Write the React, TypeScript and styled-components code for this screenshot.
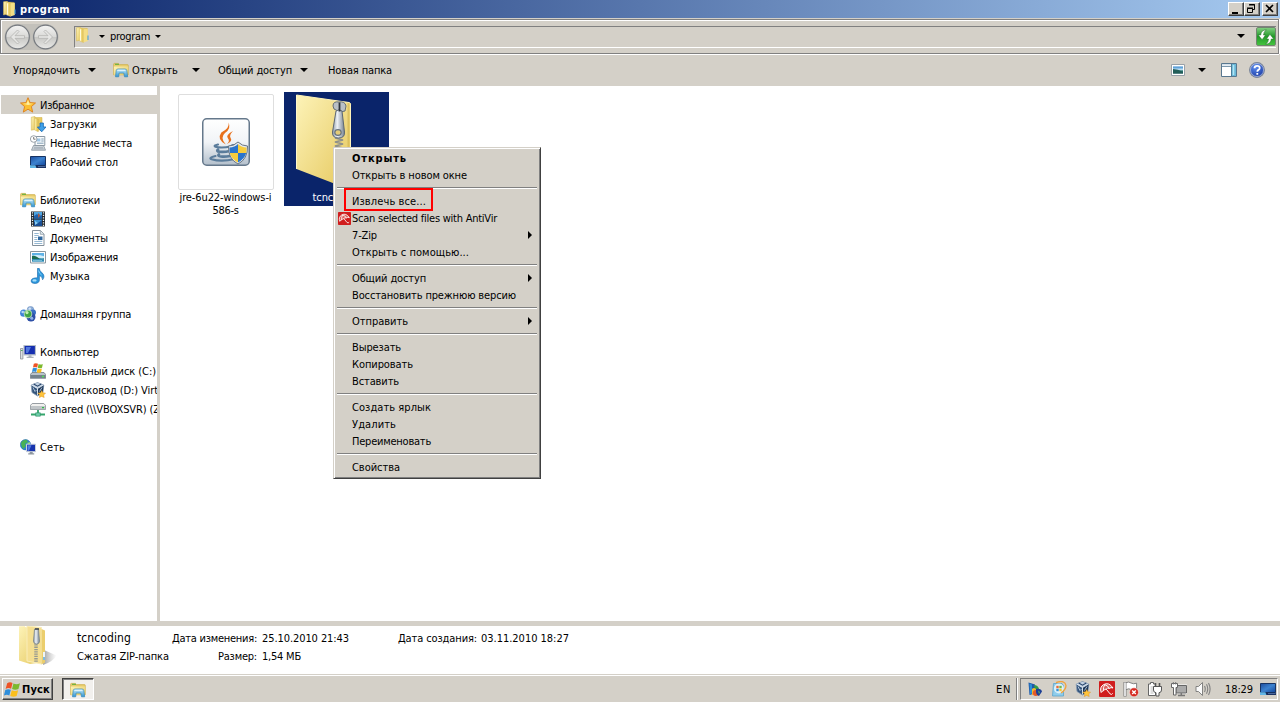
import React, { useLayoutEffect, useRef, useState } from 'react';
import styled, { createGlobalStyle, css } from 'styled-components';

const FACE = '#d4d0c8';

const GlobalStyle = createGlobalStyle`
  * { box-sizing: border-box; }
  html, body { margin: 0; padding: 0; overflow: hidden; }
  body {
    font-family: "DejaVu Sans Condensed", "DejaVu Sans", "Noto Sans", sans-serif;
    font-size: 11px;
    line-height: 13px;
    color: #000;
    background: #fff;
  }
  svg { display: block; flex: none; }
`;

/* ---------- text ---------- */

const LabelText = styled.span<{ $bold?: boolean; $size?: number; $tone?: string }>`
  display: inline-block;
  white-space: pre;
  flex: none;
  font-weight: ${p => (p.$bold ? 700 : 400)};
  font-size: ${p => p.$size ?? 11}px;
  color: ${p => p.$tone ?? '#000'};
`;

type LabelProps = { children: string; width: number; bold?: boolean; size?: number; tone?: string };

/* Tracks the text so that it takes up the given width. */
function Label({ children, width, bold, size, tone }: LabelProps) {
  const ref = useRef<HTMLSpanElement>(null);
  const [spacing, setSpacing] = useState(0);
  useLayoutEffect(() => {
    const natural = ref.current!.getBoundingClientRect().width;
    setSpacing((width - natural) / children.length);
  }, [children, width]);
  return (
    <LabelText ref={ref} $bold={bold} $size={size} $tone={tone} style={{ letterSpacing: spacing }}>
      {children}
    </LabelText>
  );
}

/* ---------- icons ---------- */

type IconProps = { size?: number };

const Svg = ({ size = 16, box = 16, children }: { size?: number; box?: number; children: React.ReactNode }) => (
  <svg width={size} height={size} viewBox={`0 0 ${box} ${box}`}>{children}</svg>
);

const HiddenDefs = styled.svg`
  position: absolute;
`;

const Gradients = () => (
  <HiddenDefs width="0" height="0">
    <defs>
      <linearGradient id="gold" x1="0" y1="0" x2="1" y2="1">
        <stop offset="0" stopColor="#fdf3b8" /><stop offset="1" stopColor="#e5c75c" />
      </linearGradient>
      <linearGradient id="goldH" x1="0" y1="0" x2="1" y2="0">
        <stop offset="0" stopColor="#fff6c0" /><stop offset=".5" stopColor="#efd777" /><stop offset="1" stopColor="#d9b94c" />
      </linearGradient>
      <linearGradient id="sky" x1="0" y1="0" x2="0" y2="1">
        <stop offset="0" stopColor="#c6ecfb" /><stop offset="1" stopColor="#2f93cf" />
      </linearGradient>
      <linearGradient id="screen" x1="0" y1="0" x2="1" y2="1">
        <stop offset="0" stopColor="#1c4c9c" /><stop offset=".5" stopColor="#3c82cf" /><stop offset="1" stopColor="#12459a" />
      </linearGradient>
      <linearGradient id="steel" x1="0" y1="0" x2="1" y2="0">
        <stop offset="0" stopColor="#8a97a5" /><stop offset=".4" stopColor="#eef2f6" /><stop offset="1" stopColor="#748190" />
      </linearGradient>
      <linearGradient id="disc" x1="0" y1="0" x2="0" y2="1">
        <stop offset="0" stopColor="#f4f4f3" /><stop offset=".48" stopColor="#dadad8" /><stop offset=".52" stopColor="#c8c8c5" /><stop offset="1" stopColor="#e9e9e7" />
      </linearGradient>
      <linearGradient id="java" x1="0" y1="0" x2="0" y2="1">
        <stop offset="0" stopColor="#ffffff" /><stop offset=".5" stopColor="#f1f4f7" /><stop offset="1" stopColor="#b3bfcb" />
      </linearGradient>
      <linearGradient id="photo" x1="0" y1="0" x2="0" y2="1">
        <stop offset="0" stopColor="#2f84cc" /><stop offset=".5" stopColor="#d7eefa" /><stop offset=".6" stopColor="#2f7f78" /><stop offset="1" stopColor="#16525f" />
      </linearGradient>
      <radialGradient id="help" cx=".4" cy=".3" r=".8">
        <stop offset="0" stopColor="#5f8ff0" /><stop offset="1" stopColor="#12309a" />
      </radialGradient>
      <linearGradient id="shadow" x1="0" y1="0" x2="1" y2="0">
        <stop offset="0" stopColor="#777" stopOpacity=".7" /><stop offset="1" stopColor="#999" stopOpacity="0" />
      </linearGradient>
    </defs>
  </HiddenDefs>
);

const FolderOpenIcon = ({ size }: IconProps) => (
  <Svg size={size}>
    <path d="M1.500 .8 5.500 .3v12.700l-4 1z" fill="url(#gold)" stroke="#d8b94e" strokeWidth=".5" />
    <path d="M6 1 12.300 1.500v11.500L8 14z" fill="#ecd06a" stroke="#cfae44" strokeWidth=".4" />
    <path d="M4.500 1 8.500 2.200V15.500l-4-1.500z" fill="url(#goldH)" stroke="#d8b94e" strokeWidth=".4" />
    <path d="M8.500 2.200 12.800 2V14L8.500 15.500z" fill="#f4de85" />
    <path d="M5.500 2.500v11" stroke="#fffbe0" strokeWidth="1" />
    <path d="M13 8.500v4.500" stroke="#4aa3dc" strokeWidth="1.100" />
  </Svg>
);

const LibraryIcon = ({ size }: IconProps) => (
  <Svg size={size}>
    <path d="M.6 2.200q0-.8.8-.8h4l1 1.200h8q.9 0 .9.9v9.300H.6z" fill="#e8cd6c" stroke="#c9a73f" strokeWidth=".6" />
    <path d="M2 2.300h4" stroke="#56ad3b" strokeWidth="1" />
    <path d="M.9 4.500h14.200v8.300H.9z" fill="url(#gold)" />
    <path d="M2.500 14.800 3.200 8.600q.2-1.600 1.800-1.600h7q1.600 0 1.800 1.600l.9 6.200h-3.200l-.7-3.700H6.100l-.4 3.700z" fill="url(#sky)" stroke="#3287bb" strokeWidth=".7" />
    <path d="M4.400 8.300h8" stroke="#eefaff" strokeWidth=".9" />
  </Svg>
);

const StarIcon = () => (
  <Svg>
    <path d="m8 .7 2.100 4.900 5.400.4-4.100 3.600 1.300 5.500L8 12.200l-4.700 2.900 1.300-5.500L.5 6l5.400-.4z" fill="#fcbf32" stroke="#dc7f1c" strokeWidth=".9" strokeLinejoin="round" />
    <path d="m8 2.700 1.300 3.800 3.900.3-5 1.200-5.300-1.200 3.800-.3z" fill="#fff0a0" />
  </Svg>
);

const DownloadsIcon = () => (
  <Svg>
    <path d="M1.300 1.200 5 .5v13l-3.700.7z" fill="url(#gold)" stroke="#cfae44" strokeWidth=".5" />
    <path d="M5 1.500h7V14H6z" fill="#e9cb62" stroke="#cfae44" strokeWidth=".5" />
    <path d="m4.500 2 3.800 1.300V15.800l-3.800-1.900z" fill="url(#goldH)" stroke="#cfae44" strokeWidth=".4" />
    <path d="M10 7h3.400v4H16l-4.300 4.800L7.400 11H10z" fill="#3fa0e8" stroke="#1668b4" strokeWidth=".8" />
  </Svg>
);

const RecentIcon = () => (
  <Svg>
    <path d="M5 1.500h9.800v9H5z" fill="#f8fafb" stroke="#8997a3" />
    <path d="M6.800 3.500h3.600v3H6.800z" fill="#9ec6e6" /><path d="M11.300 4h2.400M11.300 6h2.400M7 8.200h6.600" stroke="#7e9db6" />
    <path d="M3.500 10.500h10l2 4.700H1.500z" fill="#d3dae0" stroke="#84909b" strokeWidth=".8" />
    <path d="M4 12.300h9M3.600 13.800h10" stroke="#8f9ba6" strokeWidth=".7" />
    <circle cx="3.700" cy="4" r="3.300" fill="#fff" stroke="#8e979f" strokeWidth=".9" /><path d="M3.700 2v2.200h1.800" stroke="#555" strokeWidth=".8" fill="none" />
  </Svg>
);

const DesktopIcon = ({ size }: IconProps) => (
  <Svg size={size}>
    <path d="M.5 2.500h15v9H.5z" fill="url(#screen)" stroke="#173362" />
    <path d="M0 11.600h16v2.400H0z" fill="#162c5c" /><path d="M0 11.300h5.400l1 2.700H0z" fill="#60b5e5" />
    <path d="M8 12.600h7.500" stroke="#6b8cc0" strokeWidth=".7" />
  </Svg>
);

const VideoIcon = () => (
  <Svg>
    <path d="M1 .5h14v15H1z" fill="#23282d" />
    <path d="M4 1h8v6.400H4z" fill="#4fa5e1" /><path d="M4 8.600h8V15H4z" fill="#3a8fd2" />
    <path d="m4 5 3-2 2 2 3-1v3.400H4z" fill="#1f5fa8" /><path d="m8 2 2.500 2.500L8 7z" fill="#a65a44" />
    <path d="m4 11 4 1 4-3v6H4z" fill="#1b4f94" /><path d="m5 10 3 2-3 2z" fill="#8bd0f4" />
    <path d="M2.500 1.200v14M13.500 1.200v14" stroke="#eef2f4" strokeWidth="1.300" strokeDasharray="1.300 1.200" />
  </Svg>
);

const DocumentIcon = () => (
  <Svg>
    <path d="M2.500.5h8l3.500 3.600v11.400H2.500z" fill="#fff" stroke="#83909b" />
    <path d="M10.300.7v3.600H14" fill="#dfe8ee" stroke="#83909b" strokeWidth=".7" />
    <path d="M4.300 3.500h4.400M4.300 5.500h4.400M4.300 7.500h3M4.300 9.500h3M4.300 11.500h8M4.300 13.500h8" stroke="#7aa6c8" strokeWidth=".8" />
    <path d="M8 6.500h4.500v3.600H8z" fill="#2f679f" />
  </Svg>
);

const PictureIcon = ({ size }: IconProps) => (
  <Svg size={size}>
    <path d="M.5 2.500h15v11.500H.5z" fill="#fff" stroke="#8b979f" />
    <path d="M2 4h12v8.500H2z" fill="#5fb2e6" /><path d="M2 6.500q6-1.500 12 .8v2H2z" fill="#d5effa" />
    <path d="M2 7q3-1 5.500 1.300T14 9.400v.9H2z" fill="#1c6d50" /><path d="M2 10.300h12v2.200H2z" fill="#2b86ac" /><path d="M3 11.500h9" stroke="#8fd0e4" strokeWidth=".7" />
  </Svg>
);

const MusicIcon = () => (
  <Svg>
    <path d="M7.500.3h1.700q.5 2.700 2.800 4.500 3.600 3.100.6 7-.1-3.200-3.200-4.300v4.200q0 3.500-4.300 3.800-4 .1-4-2.400 0-3.400 6.400-3.300z" fill="#2c98dc" stroke="#1b67a9" strokeWidth=".6" />
    <ellipse cx="4.500" cy="12.400" rx="2" ry="1.200" fill="#a7defa" />
    <path d="M8.600 2.500q.5 3 3 4.500" stroke="#8bd3f8" fill="none" />
  </Svg>
);

const HomegroupIcon = () => (
  <Svg>
    <circle cx="10.500" cy="3.700" r="3.300" fill="#8fb0da" stroke="#5f84b8" strokeWidth=".5" /><circle cx="3.700" cy="7.200" r="3.600" fill="#3f82d8" />
    <circle cx="13" cy="6.500" r="3" fill="#3a70c4" /><circle cx="11" cy="11" r="4.500" fill="#2d4fa6" />
    <circle cx="8" cy="8" r="3.900" fill="#3fa547" stroke="#dff0d4" strokeWidth=".7" />
    <circle cx="7" cy="6.600" r="1.600" fill="#c3eeb2" /><circle cx="2.700" cy="6" r="1.300" fill="#b4d6f8" /><circle cx="9.800" cy="2.600" r="1.200" fill="#d5e5f7" /><circle cx="11.800" cy="12.300" r="1.500" fill="#8fb3e8" />
  </Svg>
);

const ComputerIcon = () => (
  <Svg>
    <path d="M.5 4.500h2.400v10.500H.5z" fill="#dce0e3" stroke="#8b9197" strokeWidth=".8" /><path d="M1.200 6.500h1.300" stroke="#34a24b" />
    <path d="M4 1.500h11.500v9.300H4z" fill="#162fb0" stroke="#b5bec7" strokeWidth="1.200" />
    <path d="M6 3h5l-3 6H6z" fill="#5c84e5" opacity=".85" />
    <path d="M8.500 11.300h3v1.700h-3zM6.600 12.800h7v1.200h-7z" fill="#adb4bb" />
  </Svg>
);

const WindowsFlag = ({ size }: IconProps) => (
  <Svg size={size}>
    <path d="M3 2Q5.500.5 8 1.800L6.700 7.200Q4 6 1.500 7.500z" fill="#ee5325" />
    <path d="M8.900 2.300q2.800 1.500 6.100-.1l-1.400 5.300q-3 1.500-6 0z" fill="#7cb92d" />
    <path d="M1.200 8.500q2.700-1.500 5.200-.2L5 13.600Q2.500 12.300-.1 13.700z" fill="#2f8edb" />
    <path d="M7.300 8.700q3 1.400 6 0L11.900 14q-2.900 1.500-6 0z" fill="#fbbf1d" />
  </Svg>
);

const DriveIcon = () => (
  <Svg>
    <path d="m2 9.500 12 0 1.700 2v3.800H.3v-3.800z" fill="#b9c2c9" stroke="#606d77" strokeWidth=".7" />
    <path d="M.6 12h14.800v3H.6z" fill="#74828c" /><path d="M12 13.500h2" stroke="#54de5a" strokeWidth="1.300" />
    <path d="M3.800.700q2.300-1 4.200.1L7.200 4.600q-2.300-1-4.200 0z" fill="#ee5325" /><path d="M8.600 1q2.300 1 4.200 0l-.8 3.700q-2.200 1-4.200 0z" fill="#7cb92d" />
    <path d="M2.800 5.300q2.200-1 4.200 0l-.8 3.700q-2.200-1-4.200 0z" fill="#2f8edb" /><path d="M7.600 5.500q2.200 1 4.300 0l-.8 3.700q-2.200 1-4.300 0z" fill="#fbbf1d" />
  </Svg>
);

const VBoxIcon = () => (
  <Svg>
    <path d="M7.500.6 13.800 3l-.9 7.500L7.500 14 2 10.500 1.200 3z" fill="#35557c" stroke="#8499b2" strokeWidth=".8" />
    <path d="M7.500.8 13.500 3 7.500 6.500 1.500 3z" fill="#c4d3e4" /><path d="M7.500 6.500 13.500 3l-.8 7.300L7.500 13.700z" fill="#1f3858" />
    <path d="m3.700 2 3.800 2.200L11.300 2" fill="none" stroke="#28456a" strokeWidth="1.100" />
    <path d="M1.500 3 7.500 6.500 13.500 3M7.500 6.500v7" fill="none" stroke="#e8f0f8" strokeWidth=".9" />
    <path d="m3 5.500 2 4 1.500-1.500M12 5.500l-2.500 4" fill="none" stroke="#b9cce0" strokeWidth=".9" />
    <path d="m11.700 8.500 1.200 2.300 2.700.3-1.900 1.900.5 2.600-2.500-1.200-2.400 1.200.4-2.600-1.900-1.900 2.700-.3z" fill="#ffc43b" stroke="#d98b18" strokeWidth=".4" />
  </Svg>
);

const NetDriveIcon = () => (
  <Svg>
    <path d="M2.200 2.500h11.600l1.700 1.800v4.200H.5V4.300z" fill="#f1f1ef" stroke="#7f878d" strokeWidth=".8" />
    <path d="M.8 5h14.400v3.200H.8z" fill="#c0c5c8" /><path d="M12 6.600h2" stroke="#2cbd44" strokeWidth="1.300" />
    <path d="M8 9v4M1 13.500h14" stroke="#35a66c" strokeWidth="1.800" /><path d="M5.700 11.800h4.600v3.400H5.700z" fill="#6fceaa" stroke="#268a60" strokeWidth=".6" />
  </Svg>
);

const NetworkIcon = () => (
  <Svg>
    <circle cx="5.500" cy="5.700" r="5.200" fill="#2b86d4" stroke="#1a5c9f" strokeWidth=".5" />
    <path d="M1 4q2-3.500 5.500-3.200L8 3 5 5l1 2-3 3Q1 7 1 4z" fill="#49b254" /><path d="m7 4 3-1v4z" fill="#92d86f" />
    <path d="M6.500 5.200h9v7.500h-9z" fill="#1733ad" stroke="#cbd2d9" /><path d="M7.500 6.200h4l-2.500 5.500H7.500z" fill="#537be0" />
    <path d="M9.700 13h3v1.500h-3zM8.200 14.300h6v1.200h-6z" fill="#8d969f" />
  </Svg>
);

const UmbrellaIcon = ({ size }: IconProps) => (
  <Svg size={size}>
    <rect width="16" height="16" rx="1" fill="#d01d1d" />
    <path d="M2.200 11.500Q.2 6.200 4.700 3.500 10 .8 14 7q-2.200-1-3.600.4-1.900-.9-3.200.7-1.900.1-2.600 1.600-1.500.2-2.400 1.800z" fill="#dd6460" stroke="#fff" strokeWidth="1" strokeLinejoin="round" />
    <path d="M4.600 9.700q-.6-3.700 1.100-6M10.400 7.400Q8.500 4 5.700 3.700M7.200 8.100l3.900 4.800q1.600 1.300 2.600-.5" fill="none" stroke="#fff" strokeWidth="1" />
  </Svg>
);

const ViewIcon = () => (
  <Svg>
    <path d="M1.500 2.500h13v11h-13z" fill="#fff" stroke="#99a1a8" /><path d="M3 4.500h10v7H3z" fill="url(#photo)" />
    <path d="M3 7q5 0 10 3v1.500H3z" fill="#225e58" />
  </Svg>
);

const PaneIcon = () => (
  <Svg>
    <path d="M.5 1.500h15v13H.5z" fill="#fff" stroke="#58778f" /><path d="M1 2h14v1.600H1z" fill="#d3e0ea" /><path d="M1 4.500h9" stroke="#7c98ad" />
    <path d="M10.500 2h4.500v12h-4.500z" fill="#69b9d8" /><path d="M12.500 3v10" stroke="#b3e4f5" strokeWidth="1.500" /><path d="M10.500 2v12" stroke="#4c7c98" />
  </Svg>
);

const HelpIcon = () => (
  <Svg>
    <circle cx="8" cy="8" r="7.400" fill="url(#help)" stroke="#7d8799" strokeWidth="1.100" />
    <circle cx="8" cy="8" r="6.500" fill="none" stroke="#d3dcf0" strokeWidth=".6" />
    <path d="M5.500 6.200q0-2.400 2.600-2.400 2.600 0 2.600 2.100 0 1.300-1.300 2Q8.300 8.500 8.300 9.800M8.300 11v1.700" fill="none" stroke="#fff" strokeWidth="1.800" />
  </Svg>
);

const RefreshIcon = () => (
  <Svg>
    <path d="M8.300.8Q3 1.200 2.700 6H.2l3.900 4.700L7.600 6H5.500q-.2-2.800 2.800-5.200z" fill="#fff" stroke="#1d6b20" strokeWidth=".5" />
    <path d="M7.700 15.200q5.300-.4 5.600-5.200h2.500L11.900 5.300 8.400 10h2.100q.2 2.800-2.800 5.200z" fill="#fff" stroke="#1d6b20" strokeWidth=".5" />
  </Svg>
);

const ActionFlagIcon = () => (
  <Svg>
    <path d="M2 1v14.500" stroke="#777" strokeWidth="3" /><path d="M3 1.700q3-1.400 5 .3 2.500 1.400 5.600.2V9q-3.500 1-5.600-.5T3 8.700z" fill="#fff" stroke="#777" strokeWidth=".9" /><path d="M2 1.500V15" stroke="#fff" strokeWidth="1.500" />
    <circle cx="11" cy="11.300" r="4.500" fill="#d52b22" stroke="#fff" strokeWidth=".5" /><path d="m9.200 9.500 3.600 3.600m0-3.600-3.600 3.600" stroke="#fff" strokeWidth="1.400" />
  </Svg>
);

const PowerIcon = () => (
  <Svg>
    <path d="M3.500 1.500h3V3h2v11.500h-7V3h2z" fill="#fff" stroke="#666" /><path d="M3.500 5v8h3V5z" fill="#ddd" />
    <path d="M8.500 5V2M12.500 5V2" stroke="#555" strokeWidth="1.600" /><path d="M6.500 5.500h8v3.500q0 2.500-2.500 2.700V15H9v-3.300Q6.500 11.500 6.500 9z" fill="#fff" stroke="#555" />
  </Svg>
);

const NetTrayIcon = () => (
  <Svg>
    <path d="M5 4.500h10.500v7.500H5z" fill="#aaa" stroke="#fff" strokeWidth="2" /><path d="M5 4.500h10.500v7.500H5z" fill="#aaa" stroke="#666" />
    <path d="M7 14.500h7M10.300 12v2.500" stroke="#777" strokeWidth="1.500" />
    <path d="M.5 2.500h6v4H5v7.500H2.500V6.500h-2z" fill="#fff" stroke="#666" /><path d="M2.300 1v2.500M4.700 1v2.500" stroke="#777" />
  </Svg>
);

const SpeakerIcon = () => (
  <Svg>
    <path d="M1 5.500h2.500L7.500 1.500v13l-4-4H1z" fill="#fafafa" stroke="#777" strokeWidth=".9" />
    <path d="M9.500 5q1.500 3 0 6M11.500 3.300q2.500 4.700 0 9.400M13.500 2q3.200 6 0 12" fill="none" stroke="#808080" strokeWidth="1.100" />
  </Svg>
);

const SafeRemoveIcon = () => (
  <Svg>
    <path d="M1.500 1.500 8 3.500v9l-5.500 1.500z" fill="#1f58a8" /><path d="m2.500 2.500 2.500 1v9l-2 .5z" fill="#2a8fd8" />
    <path d="M7 4q4 0 5 4l-4 2z" fill="#2f9c4c" /><path d="M5 8q2-2 4 0v5l-4 1z" fill="#eeb92e" />
    <circle cx="8.800" cy="12" r="3" fill="#e25a2b" /><path d="M9 8q5-1 6 2.500l-3 4.500q-2.500-.5-3-4z" fill="#1c3f95" /><path d="M11 9.500l2 1.500-1 2z" fill="#58b55f" />
  </Svg>
);

const UpdateIcon = () => (
  <Svg>
    <path d="M2.500 2.500h8.500L12.500 5v10h-11z" fill="#8fcdec" stroke="#5aa5cd" strokeWidth=".8" />
    <circle cx="8" cy="7.500" r="5" fill="#e7f5fb" opacity=".9" />
    <path d="M5.300 4.800h2.400v2.400H5.300z" fill="#ec6a35" /><path d="M8.300 4.800h2.400v2.400H8.300z" fill="#75b943" /><path d="M5.300 7.800h2.400v2.400H5.300z" fill="#3794d9" /><path d="M8.300 7.800h2.400v2.400H8.300z" fill="#f8c436" />
    <path d="M5 1.600Q14-1.500 15 4.500q0 4-5 7.500" fill="none" stroke="#f2a33c" strokeWidth="1.300" />
  </Svg>
);

const JavaInstallerIcon = () => (
  <svg width="48" height="48" viewBox="0 0 48 48">
    <rect x=".75" y=".75" width="46.500" height="46.500" rx="4" fill="url(#java)" stroke="#65788b" strokeWidth="1.500" />
    <path d="M26.500 4.500q3 6-3.500 10.500-5.500 4.700.8 11.500-9.400-5.200-4.500-12Q28 10 26.500 4.500z" fill="#e8711c" />
    <path d="M31 13q-8 4-5 7.500 2.200 2.500-1 5.500 6-2.800 3.500-6.200-1.500-2.500 2.500-6.800z" fill="#e8711c" />
    <g fill="none" stroke="#5a7c9b" strokeLinecap="round">
      <path d="M16 26.500q-5 1.200-2.500 2.200 6 1.700 15-.2" strokeWidth="2.200" />
      <path d="M16 31.500q-2 1.600 1.500 2.200 5 .7 10-.7" strokeWidth="2.800" />
      <path d="M17 36.300q-2 1.600 2 2.200 4 .5 9-.5" strokeWidth="2.600" />
      <path d="M13.500 38q-7.500 2-4 3.200 10 3 23-.2" strokeWidth="2.200" />
      <path d="M30 27q5-1 4 2.500-.7 2.500-4 3.500" strokeWidth="1.500" />
    </g>
    <path d="M36 24q4 4 9.500 4 .5 13-9.500 18-10-5-9.500-18Q32 28 36 24z" fill="#e4e9ee" stroke="#697682" />
    <path d="M36 26v9h-8.200q-.5-2.700-.3-5.500 5.300-.3 8.500-3.500z" fill="#2a74cc" /><path d="M36 26v9h8.200q.5-2.700.3-5.500-5.300-.3-8.500-3.500z" fill="#f6cc3d" />
    <path d="M36 35v9.500q-6.500-3.500-8.200-9.500z" fill="#f6cc3d" /><path d="M36 35v9.500q6.500-3.500 8.200-9.500z" fill="#2a74cc" />
  </svg>
);

const ZipFolderIcon = () => (
  <svg width="56" height="96" viewBox="0 0 56 96">
    <path d="M.5 1 53 8.500q2 .3 2 2V96L.5 75z" fill="url(#gold)" />
    <path d="M.5 1v74" stroke="#fff7cc" /><path d="M.5 1 53 8.500q1.500.3 1.500 2V90" fill="none" stroke="#fff4ba" />
    <path d="M52.500 9v84" stroke="#d1b34c" strokeWidth="2" opacity=".6" />
    <path d="m39 44 8 2-8 2 8 2-8 2 8 2-8 2 8 2" fill="none" stroke="#8f918c" strokeWidth="1.800" />
    <path d="M37 12q0-5 6-4 6-1 7 4l-1 5-5 1-6-3z" fill="#b9c0c6" stroke="#646d75" />
    <path d="M40 17q3-2.500 6 0l2.500 21q.5 6-6 6t-6-6z" fill="url(#steel)" stroke="#5d6873" />
    <ellipse cx="42" cy="38.500" rx="3.200" ry="2.800" fill="#e4cc78" stroke="#68737d" strokeWidth="1.200" />
    <path d="M43.500 8.500v9" stroke="#2d343b" strokeWidth="1.800" />
  </svg>
);

const ZipSmallIcon = () => (
  <svg width="40" height="40" viewBox="0 0 40 40">
    <path d="m26 24 12.500 5.500Q36 35 25 39z" fill="url(#shadow)" />
    <path d="M1 .5 7 0v36l-6-2z" fill="#fdf2bc" /><path d="M7 1l19 4v31L12 38 1 34.500V.5z" fill="url(#gold)" />
    <path d="M9 0 23.500 1.500V38L9 35z" fill="#f5df91" stroke="#f9edba" />
    <path d="M23.500 3 27 4.500v32l-3.500 2z" fill="#ebce6d" />
    <path d="M18 16v20" stroke="#969991" strokeWidth="3.500" strokeDasharray="1.300 1" />
    <path d="M16.500 3h4l1 12q0 3-3 3t-3-3z" fill="url(#steel)" stroke="#707b84" strokeWidth=".7" /><path d="M17 3h4" stroke="#3c454c" strokeWidth="1.500" />
    <path d="M26 26v8" stroke="#eef5f7" strokeWidth="2" /><path d="M26 31v3" stroke="#58a8da" strokeWidth="1.500" />
  </svg>
);

const NavDiscs = () => (
  <svg width="56" height="28" viewBox="0 0 56 28">
    <path d="M14 1h28q5 0 5 5v16q0 5-5 5H14z" fill="#c3c1bb" />
    {[13.5, 41.5].map((cx, i) => (
      <g key={cx}>
        <circle cx={cx} cy="14" r="13" fill="#b9b8b3" /><circle cx={cx} cy="14" r="11.800" fill="url(#disc)" stroke="#777b80" strokeWidth="1.200" />
        <g transform={i ? `translate(${cx} 14)` : `translate(${cx} 14) scale(-1 1)`}>
          <path d="M-7-1.300H2.500L-1.500-5.500 0-7 7 0 0 7-1.500 5.500 2.500 1.300H-7z" fill="#e6e6e4" stroke="#b3b3b0" strokeWidth=".8" />
        </g>
      </g>
    ))}
  </svg>
);

/* ---------- window chrome ---------- */

const Screen = styled.div`
  position: relative;
  width: 1280px;
  height: 702px;
  display: flex;
  flex-direction: column;
  overflow: hidden;
  background: ${FACE};
`;

const TitleBar = styled.header`
  flex: none;
  height: 18px;
  display: flex;
  align-items: center;
  gap: 2px;
  padding: 0 2px;
  background: linear-gradient(90deg, #0a246a, #a6caf0);
`;

const Spacer = styled.div`
  flex: 1;
`;

const CaptionButtons = styled.div`
  display: flex;
  & > :last-child { margin-left: 2px; }
`;

const raised = css`
  border: 1px solid;
  border-color: #fff #404040 #404040 #fff;
  box-shadow: inset -1px -1px #808080;
`;

const CaptionButton = styled.button`
  width: 16px;
  height: 14px;
  padding: 0;
  background: ${FACE};
  ${raised}
`;

const Rebar = styled.div`
  flex: none;
  height: 35px;
  margin: 1px 1px 1px 0;
  border: 1px solid #808080;
  box-shadow: inset 1px 1px #fff, 0 1px #fff, 1px 0 #fff;
  display: flex;
  align-items: flex-start;
  padding: 3px 2px 0 3px;
`;

const AddressBar = styled.div`
  flex: 1;
  height: 22px;
  margin: 3px 0 0 14px;
  display: flex;
  align-items: flex-start;
  border: 1px solid #808080;
  border-right: 0;
  border-bottom-color: #fff;
`;

const Crumb = styled.div`
  flex: 1;
  height: 18px;
  display: flex;
  align-items: center;
  gap: 5px;
  padding-left: 8px;
`;

const RefreshButton = styled.button`
  width: 20px;
  height: 19px;
  margin: 0 0 0 11px;
  padding: 1px;
  border: 1px solid #71856f;
  border-radius: 2px;
  background: linear-gradient(#7fce7f, #239a2a 50%, #45c33e);
`;

const Caret = styled.i<{ $size?: number }>`
  flex: none;
  width: 0;
  height: 0;
  border: ${p => p.$size ?? 3}px solid transparent;
  border-top: ${p => p.$size ?? 3}px solid #000;
  border-bottom: 0;
`;

const Toolbar = styled.div`
  flex: none;
  height: 31px;
  display: flex;
  align-items: center;
  padding: 0 15px 1px 13px;
`;

const ToolGroup = styled.div<{ $gap: number; $after: number }>`
  display: flex;
  align-items: center;
  gap: ${p => p.$gap}px;
  margin-right: ${p => p.$after}px;
`;

const ToolButton = styled.span`
  display: flex;
  align-items: center;
  gap: 3px;
`;

const Body = styled.main`
  flex: none;
  height: 535px;
  display: flex;
  background: #fff;
`;

const Sidebar = styled.nav`
  width: 160px;
  padding: 9px 0 0 1px;
  border-right: 3px solid ${FACE};
  overflow: hidden;
`;

const TreeGroup = styled.div`
  margin-bottom: 19px;
`;

const TreeRow = styled.div<{ $depth: number; $selected?: boolean }>`
  height: 19px;
  display: flex;
  align-items: center;
  gap: 4px;
  padding-left: ${p => 19 + p.$depth * 10}px;
  background: ${p => (p.$selected ? FACE : 'transparent')};
  & > span { margin-top: 2px; }
`;

const Files = styled.section`
  flex: 1;
  display: flex;
  align-items: flex-start;
  gap: 6px;
  padding: 6px 0 0 13px;
`;

const Tile = styled.div<{ $selected?: boolean }>`
  width: 105px;
  height: ${p => (p.$selected ? 114 : 128)}px;
  padding-top: 2px;
  display: flex;
  flex-direction: column;
  align-items: center;
  background: ${p => (p.$selected ? '#0a246a' : 'transparent')};
`;

const Thumb = styled.div<{ $framed?: boolean }>`
  flex: none;
  width: 96px;
  height: 96px;
  margin-bottom: 1px;
  display: flex;
  align-items: center;
  justify-content: ${p => (p.$framed ? 'center' : 'flex-start')};
  padding-left: ${p => (p.$framed ? 0 : 7)}px;
  border: ${p => (p.$framed ? '1px solid #dedede' : '0')};
  border-radius: 2px;
`;

/* ---------- details pane ---------- */

const Details = styled.footer`
  flex: none;
  height: 48px;
  margin-top: 5px;
  display: flex;
  background: #fff;
  padding-left: 18px;
`;

const DetailsColumns = styled.dl`
  margin: 6px 0 0 19px;
  display: grid;
  grid-template-columns: 92px 88px 88px 132px 88px;
  grid-template-rows: 13px 13px;
  row-gap: 5px;
`;

const Field = styled.dd<{ $right?: boolean; $pad?: number }>`
  margin: 0;
  display: flex;
  justify-content: ${p => (p.$right ? 'flex-end' : 'flex-start')};
  padding-left: ${p => p.$pad ?? 0}px;
`;

/* ---------- context menu ---------- */

const Menu = styled.div`
  position: absolute;
  left: 333px;
  top: 147px;
  width: 208px;
  height: 332px;
  padding: 2px;
  background: ${FACE};
  border: 1px solid;
  border-color: ${FACE} #404040 #404040 ${FACE};
  box-shadow: inset 1px 1px #fff, inset -1px -1px #808080;
`;

const MenuRow = styled.div`
  position: relative;
  height: 17px;
  display: flex;
  align-items: center;
  padding: 0 6px 0 2px;
`;

const MenuIconSlot = styled.span`
  width: 14px;
  flex: none;
`;

const Divider = styled.hr`
  height: 2px;
  margin: 3px 1px 4px;
  border: 0;
  border-top: 1px solid #808080;
  border-bottom: 1px solid #fff;
`;

const SubmenuArrow = styled.i`
  width: 0;
  height: 0;
  margin: 0 0 2px auto;
  border: 4px solid transparent;
  border-left: 4px solid #000;
  border-right: 0;
`;

const Highlight = styled.span`
  position: absolute;
  left: 8px;
  top: -5px;
  width: 89px;
  height: 23px;
  border: 2px solid #f00;
`;

/* ---------- taskbar ---------- */

const Taskbar = styled.footer`
  flex: none;
  height: 28px;
  border-top: 1px solid ${FACE};
  box-shadow: inset 0 1px #fff;
  display: flex;
  align-items: center;
  padding: 3px 2px 2px;
`;

const StartButton = styled.button`
  width: 51px;
  height: 22px;
  padding: 0 0 0 1px;
  display: flex;
  align-items: center;
  gap: 1px;
  font: inherit;
  background: ${FACE};
  ${raised}
`;

const TaskButton = styled.button`
  width: 32px;
  height: 22px;
  margin-left: 9px;
  padding: 1px 0 0;
  display: flex;
  align-items: center;
  justify-content: center;
  border: 1px solid;
  border-color: #404040 #fff #fff #404040;
  box-shadow: inset 1px 1px #808080;
  background: #f2f0ed;
`;

const Tray = styled.div`
  height: 22px;
  margin-left: 2px;
  padding: 0 1px 0 6px;
  display: flex;
  align-items: center;
  border: 1px solid;
  border-color: #808080 #fff #fff #808080;
`;

const TrayGrip = styled.i`
  width: 2px;
  height: 22px;
  margin-left: 5px;
  border-left: 1px solid #808080;
  border-right: 1px solid #fff;
`;

const TrayIcons = styled.div`
  display: flex;
  gap: 8px;
  margin-right: 14px;
`;

/* ---------- data ---------- */

type Node = [React.ReactNode, string, number];

const tree: Node[][] = [
  [[<StarIcon />, 'Избранное', 54], [<DownloadsIcon />, 'Загрузки', 47], [<RecentIcon />, 'Недавние места', 82], [<DesktopIcon />, 'Рабочий стол', 68]],
  [[<LibraryIcon />, 'Библиотеки', 60], [<VideoIcon />, 'Видео', 32], [<DocumentIcon />, 'Документы', 58], [<PictureIcon />, 'Изображения', 68], [<MusicIcon />, 'Музыка', 40]],
  [[<HomegroupIcon />, 'Домашняя группа', 91]],
  [[<ComputerIcon />, 'Компьютер', 59], [<DriveIcon />, 'Локальный диск (C:)', 106], [<VBoxIcon />, 'CD-дисковод (D:) Virt', 108], [<NetDriveIcon />, 'shared (\\\\VBOXSVR) (Z:)', 117]],
  [[<NetworkIcon />, 'Сеть', 25]],
];

type Item = { text: string; width: number; bold?: boolean; sub?: boolean; icon?: React.ReactNode; marked?: boolean };

const menu: Item[][] = [
  [{ text: 'Открыть', width: 55, bold: true }, { text: 'Открыть в новом окне', width: 115 }],
  [
    { text: 'Извлечь все...', width: 74, marked: true },
    { text: 'Scan selected files with AntiVir', width: 145, icon: <UmbrellaIcon size={13} /> },
    { text: '7-Zip', width: 25, sub: true },
    { text: 'Открыть с помощью...', width: 117 },
  ],
  [{ text: 'Общий доступ', width: 74, sub: true }, { text: 'Восстановить прежнюю версию', width: 164 }],
  [{ text: 'Отправить', width: 56, sub: true }],
  [{ text: 'Вырезать', width: 49 }, { text: 'Копировать', width: 61 }, { text: 'Вставить', width: 47 }],
  [{ text: 'Создать ярлык', width: 79 }, { text: 'Удалить', width: 44 }, { text: 'Переименовать', width: 79 }],
  [{ text: 'Свойства', width: 48 }],
];

export default function App() {
  return (
    <Screen>
      <GlobalStyle />
      <Gradients />
      <TitleBar>
        <FolderOpenIcon />
        <Label width={50} bold tone="#fff">program</Label>
        <Spacer />
        <CaptionButtons>
          <CaptionButton><svg width="14" height="12"><path d="M3 9h6v2H3z" /></svg></CaptionButton>
          <CaptionButton><svg width="14" height="12"><path d="M4.500 2v-.5h5v5H8M4 2h6M2.500 5.500h5v4h-5zM2 5h6" fill="none" stroke="#000" /></svg></CaptionButton>
          <CaptionButton><svg width="14" height="12"><path d="m3 2 7 7M10 2 3 9" stroke="#000" strokeWidth="1.600" /></svg></CaptionButton>
        </CaptionButtons>
      </TitleBar>

      <Rebar>
        <NavDiscs />
        <AddressBar>
          <FolderOpenIcon />
          <Crumb>
            <Caret />
            <Label width={40}>program</Label>
            <Caret />
            <Spacer />
            <Caret $size={4} />
          </Crumb>
          <RefreshButton><RefreshIcon /></RefreshButton>
        </AddressBar>
      </Rebar>

      <Toolbar>
        <ToolGroup $gap={8} $after={17}><Label width={67}>Упорядочить</Label><Caret $size={4} /></ToolGroup>
        <ToolGroup $gap={14} $after={18}>
          <ToolButton><LibraryIcon /><Label width={46}>Открыть</Label></ToolButton>
          <Caret $size={4} />
        </ToolGroup>
        <ToolGroup $gap={8} $after={20}><Label width={74}>Общий доступ</Label><Caret $size={4} /></ToolGroup>
        <Label width={64}>Новая папка</Label>
        <Spacer />
        <ToolGroup $gap={12} $after={15}><ViewIcon /><Caret $size={4} /></ToolGroup>
        <ToolGroup $gap={12} $after={0}><PaneIcon /><HelpIcon /></ToolGroup>
      </Toolbar>

      <Body>
        <Sidebar>
          {tree.map((group, g) => (
            <TreeGroup key={g}>
              {group.map(([icon, text, width], i) => (
                <TreeRow key={text} $depth={i ? 1 : 0} $selected={!g && !i}>
                  {icon}<Label width={width}>{text}</Label>
                </TreeRow>
              ))}
            </TreeGroup>
          ))}
        </Sidebar>
        <Files>
          <Tile>
            <Thumb $framed><JavaInstallerIcon /></Thumb>
            <Label width={92}>jre-6u22-windows-i</Label>
            <Label width={26}>586-s</Label>
          </Tile>
          <Tile $selected>
            <Thumb><ZipFolderIcon /></Thumb>
            <Label width={48} tone="#fff">tcncoding</Label>
          </Tile>
        </Files>
      </Body>

      <Details>
        <ZipSmallIcon />
        <DetailsColumns>
          <Field><Label width={54} size={12}>tcncoding</Label></Field>
          <Field $right><Label width={85}>Дата изменения:</Label></Field>
          <Field $pad={5}><Label width={87}>25.10.2010 21:43</Label></Field>
          <Field $right><Label width={79}>Дата создания:</Label></Field>
          <Field $pad={4}><Label width={88}>03.11.2010 18:27</Label></Field>
          <Field><Label width={92}>Сжатая ZIP-папка</Label></Field>
          <Field $right><Label width={39}>Размер:</Label></Field>
          <Field $pad={5}><Label width={39}>1,54 МБ</Label></Field>
        </DetailsColumns>
      </Details>

      <Taskbar>
        <StartButton><WindowsFlag size={17} /><Label width={28} bold>Пуск</Label></StartButton>
        <TaskButton><LibraryIcon /></TaskButton>
        <Spacer />
        <Label width={15}>EN</Label>
        <TrayGrip />
        <Tray>
          <TrayIcons>
            <SafeRemoveIcon /><UpdateIcon /><VBoxIcon /><UmbrellaIcon /><ActionFlagIcon /><PowerIcon /><NetTrayIcon /><SpeakerIcon />
          </TrayIcons>
          <ToolGroup $gap={7} $after={0}><Label width={28}>18:29</Label><DesktopIcon /></ToolGroup>
        </Tray>
      </Taskbar>

      <Menu>
        {menu.map((section, s) => (
          <React.Fragment key={s}>
            {s > 0 && <Divider />}
            {section.map(item => (
              <MenuRow key={item.text}>
                <MenuIconSlot>{item.icon}</MenuIconSlot>
                <Label width={item.width} bold={item.bold}>{item.text}</Label>
                {item.sub && <SubmenuArrow />}
                {item.marked && <Highlight />}
              </MenuRow>
            ))}
          </React.Fragment>
        ))}
      </Menu>
    </Screen>
  );
}
